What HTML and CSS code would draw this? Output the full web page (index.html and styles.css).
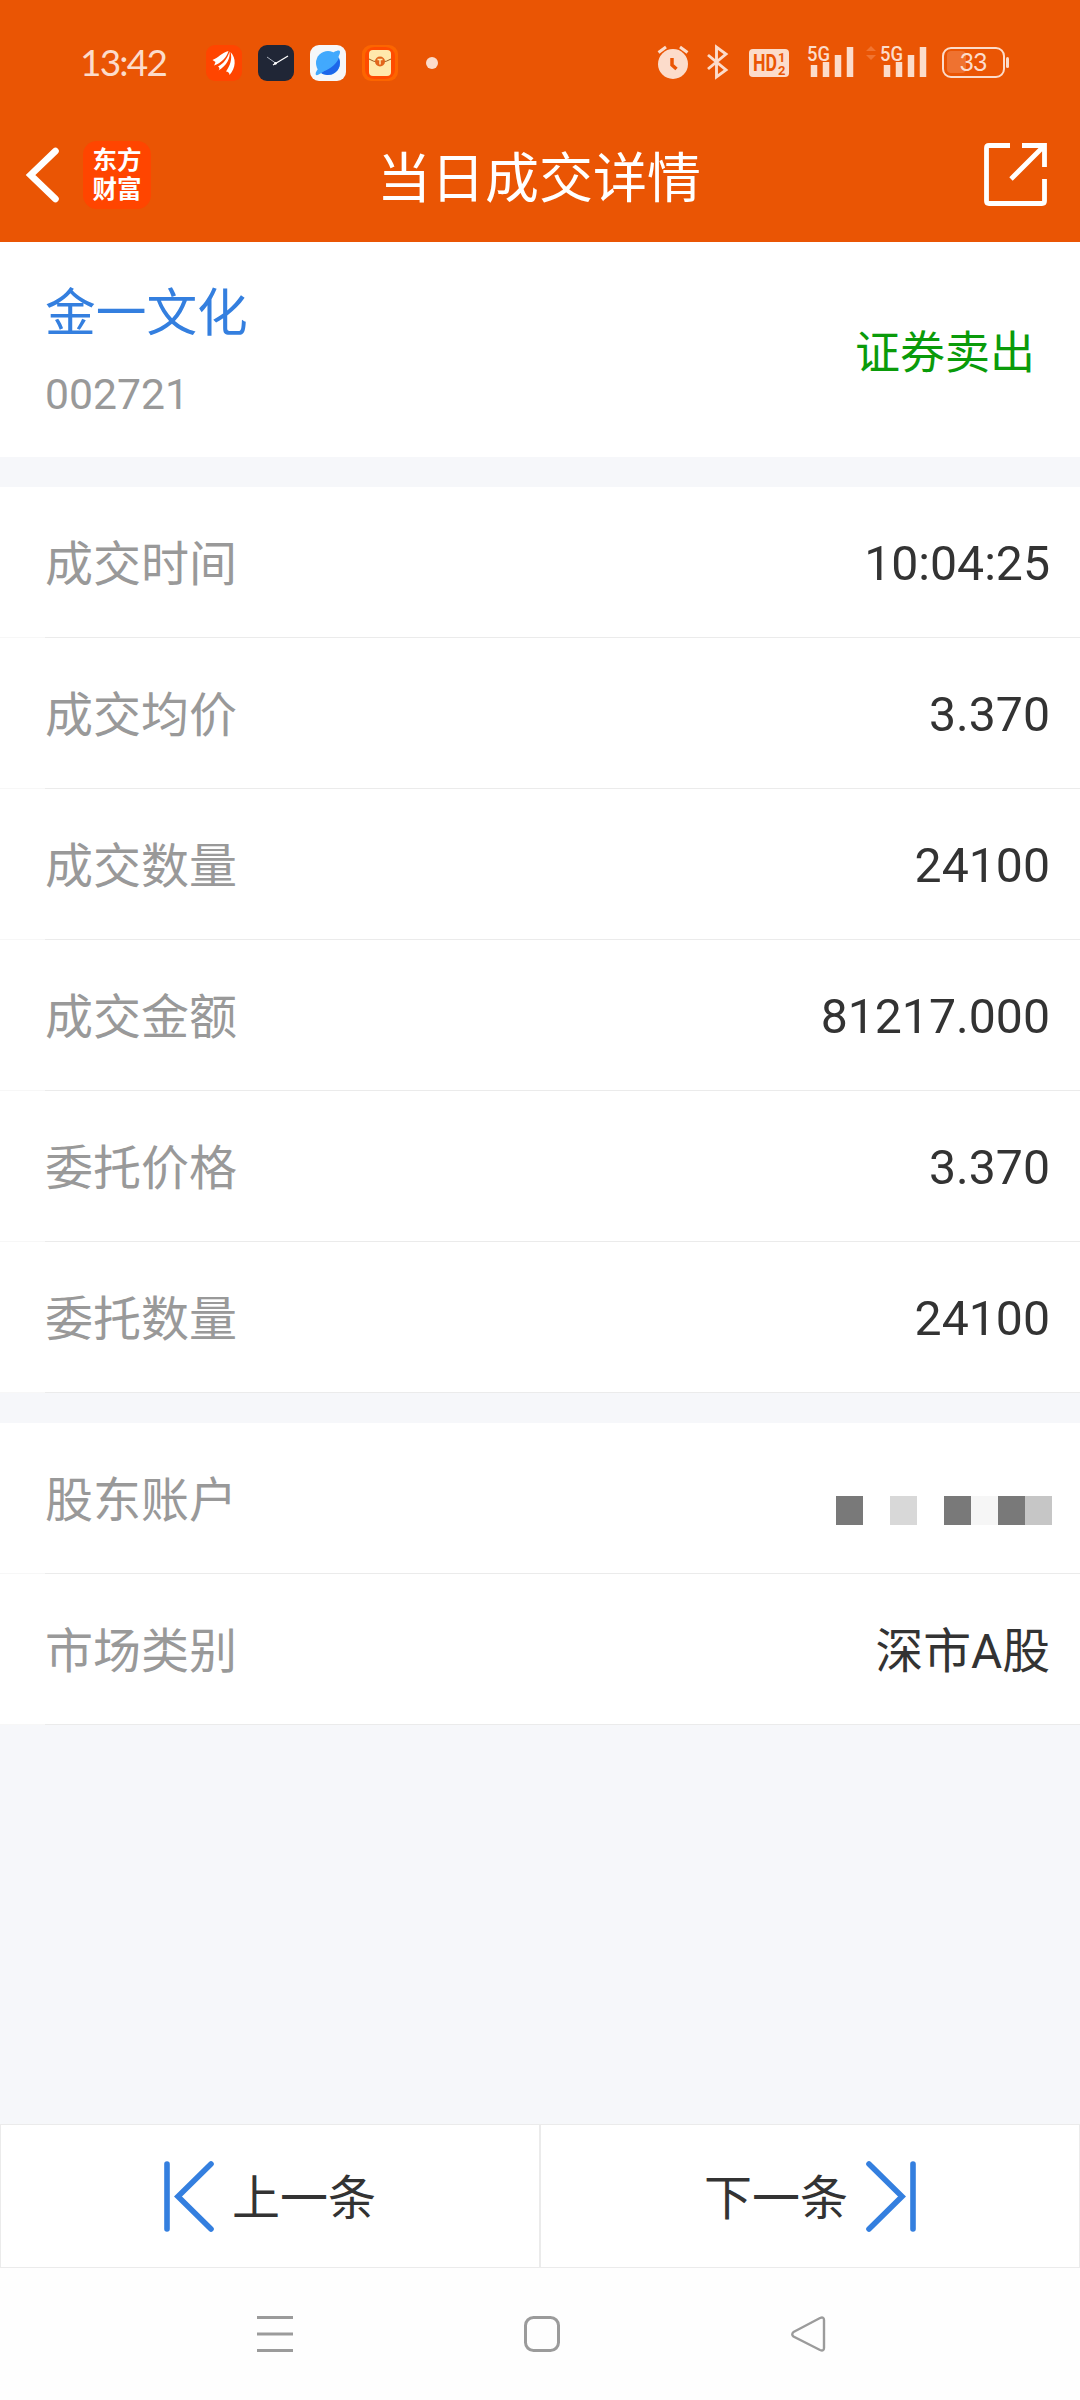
FILE: index.html
```html
<!DOCTYPE html>
<html lang="zh-CN">

<head>
    <meta charset="UTF-8">
    <meta name="viewport" content="width=device-width, initial-scale=1.0">
    <title>当日成交详情</title>
    <link rel="stylesheet" href="styles.css">
</head>

<body>
    <div class="page">
        <div class="top">
            <!-- 状态栏 -->
            <div class="status-bar">
                <span class="clock">13:42</span>
                <div class="app-icons">
                    <svg width="36" height="36" viewBox="0 0 36 36">
                        <rect width="36" height="36" rx="9" fill="#ff4500" />
                        <path d="M6.500 15C12 13 16 7.500 22.500 6C21 12 15 18.500 8 20.500C9 19 9 18 9.500 17Z" fill="#fff" />
                        <path d="M23.500 6.500C24.500 13 21 20.500 12.500 25.500C14 24 13.500 22.500 12 21.500C18 18.500 21.500 13 23.500 6.500Z" fill="#fff" />
                        <path d="M24.500 7C30.500 13 30 23 23.500 30C23.500 28 22 26.500 20 26.500C24 21 26.500 14 24.500 7Z" fill="#fff" />
                    </svg>
                    <svg width="36" height="36" viewBox="0 0 36 36">
                        <rect width="36" height="36" rx="9" fill="#202636" />
                        <path d="M9 12L17.5 18" stroke="#aeb3bd" stroke-width="1" />
                        <path d="M15 20L30 11" stroke="#fff" stroke-width="1.3" />
                        <circle cx="17.5" cy="18.3" r="1.4" fill="#fff" />
                    </svg>
                    <svg width="36" height="36" viewBox="0 0 36 36">
                        <rect width="36" height="36" rx="9" fill="#f6f7f9" />
                        <circle cx="18" cy="18" r="12" fill="#42a9fd" />
                        <path d="M29 13C26 20 18 26 9.500 27A12.300 12.300 0 0 0 29 13Z" fill="#1d66ea" />
                        <path d="M24 7C28 5 30 5 30 7C30 10 27 15 22 20C15 26 8 31 6 30C5 29 6 26 8 24Z" fill="#42a9fd" />
                    </svg>
                    <svg width="36" height="36" viewBox="0 0 36 36">
                        <rect width="36" height="36" rx="9" fill="#fc6500" />
                        <rect x="3" y="2" width="30" height="32" rx="9" fill="#ff4b00" />
                        <rect x="7" y="5" width="22" height="26" rx="4" fill="#ffe9ab" />
                        <path d="M7 14Q11 17 18 17T29 14" fill="none" stroke="#9a5a20" stroke-width="1" />
                        <circle cx="18" cy="16.500" r="5" fill="#e2661b" />
                        <path d="M15.500 14.500H20.500M18 14.500V19.500" stroke="#ffe9ab" stroke-width="1.500" />
                    </svg>
                </div>
                <span class="dot"></span>
                <div class="sys-icons">
                    <svg class="alarm" width="32" height="36" viewBox="0 0 32 36">
                        <circle cx="16" cy="19" r="15" fill="#fcdccb" />
                        <path d="M1.500 7.500L9 2M30.500 7.500L23 2" stroke="#fcdccb" stroke-width="3" />
                        <path d="M15 13V20L19.500 24" fill="none" stroke="#ea5504" stroke-width="3.500" />
                    </svg>
                    <svg class="bluetooth" width="22" height="36" viewBox="0 0 22 36">
                        <path d="M1 10L19 25L9.500 32V2L19 9L1 24" fill="none" stroke="#fcdccb" stroke-width="2.900" />
                    </svg>
                    <svg class="hd" width="40" height="36" viewBox="0 0 40 36">
                        <rect y="4" width="40" height="28" rx="4" fill="#fcdccb" />
                        <text x="4" y="26" class="hd-text" textLength="24" lengthAdjust="spacingAndGlyphs">HD</text>
                        <text x="29" y="17" class="hd-num">1</text>
                        <text x="29" y="29.500" class="hd-num">2</text>
                    </svg>
                    <svg class="signal" width="47" height="36" viewBox="0 0 47 36">
                        <text x="0" y="15.500" class="net" textLength="23" lengthAdjust="spacingAndGlyphs">5G</text>
                        <path d="M7 20V32M19 17V32M31 10V32M43 2V32" stroke="#fcdccb" stroke-width="6.500" />
                    </svg>
                    <svg class="arrows" width="10" height="36" viewBox="0 0 10 36">
                        <path d="M0 6L5 1L10 6ZM0 10L5 15L10 10Z" fill="#f17430" />
                    </svg>
                    <svg class="signal2" width="47" height="36" viewBox="0 0 47 36">
                        <text x="0" y="15.500" class="net" textLength="23" lengthAdjust="spacingAndGlyphs">5G</text>
                        <path d="M7 20V32M19 17V32M31 10V32M43 2V32" stroke="#fcdccb" stroke-width="6.500" />
                    </svg>
                    <svg class="battery" width="67" height="36" viewBox="0 0 67 36">
                        <rect x="5" y="6" width="19" height="22" rx="4" fill="#ef7230" />
                        <rect x="1" y="3" width="61" height="29" rx="8" fill="none" stroke="#fcdccb" stroke-width="2" />
                        <rect x="64" y="12" width="3" height="11" rx="1.500" fill="#fcdccb" />
                        <text x="31" y="26" class="level" text-anchor="middle">33</text>
                    </svg>
                </div>
            </div>

            <!-- 标题栏 -->
            <div class="header">
                <svg class="back" width="34" height="56" viewBox="0 0 34 56">
                    <path d="M29.500 4L4.500 28L29.500 52" fill="none" stroke="#fff" stroke-width="6.600" stroke-linecap="round" />
                </svg>
                <div class="logo">东方<br>财富</div>
                <h1>当日成交详情</h1>
                <svg class="share" width="64" height="64" viewBox="0 0 64 64">
                    <path d="M26 2.500H5Q2.500 2.500 2.500 5V58Q2.500 60.500 5 60.500H58Q60.500 60.500 60.500 58V36M38 2.500H60.500V24M60 3L27 36" fill="none" stroke="#fff" stroke-width="4.800" />
                </svg>
            </div>
        </div>

        <div class="stock">
            <div>
                <div class="stock-name">金一文化</div>
                <div class="stock-code">002721</div>
            </div>
            <div class="direction">证券卖出</div>
        </div>

        <div class="group">
            <div class="row"><span class="label">成交时间</span><span class="value">10:04:25</span></div>
            <div class="row"><span class="label">成交均价</span><span class="value">3.370</span></div>
            <div class="row"><span class="label">成交数量</span><span class="value">24100</span></div>
            <div class="row"><span class="label">成交金额</span><span class="value">81217.000</span></div>
            <div class="row"><span class="label">委托价格</span><span class="value">3.370</span></div>
            <div class="row"><span class="label">委托数量</span><span class="value">24100</span></div>
        </div>

        <div class="group">
            <div class="row">
                <span class="label">股东账户</span>
                <div class="mask">
                    <i class="dark"></i><i></i><i class="light"></i><i></i><i class="dark"></i><i class="pale"></i><i class="dark"></i><i class="mid"></i>
                </div>
            </div>
            <div class="row"><span class="label">市场类别</span><span class="value cjk">深市A股</span></div>
        </div>

        <!-- 上一条 / 下一条 -->
        <div class="pager">
            <div class="pager-btn">
                <svg width="50" height="71" viewBox="0 0 50 71">
                    <path d="M3 3V68M47 3L14 35.500L47 68" fill="none" stroke="#347fdf" stroke-width="5.600" stroke-linecap="round" />
                </svg>
                <span>上一条</span>
            </div>
            <div class="pager-btn">
                <span>下一条</span>
                <svg width="50" height="71" viewBox="0 0 50 71">
                    <path d="M47 3V68M3 3L36 35.500L3 68" fill="none" stroke="#347fdf" stroke-width="5.600" stroke-linecap="round" />
                </svg>
            </div>
        </div>

        <!-- 系统导航 -->
        <div class="nav">
            <svg width="36" height="36" viewBox="0 0 36 36">
                <path d="M0 1.500H36M0 18H36M0 34.500H36" stroke="#9b9b9b" stroke-width="3" />
            </svg>
            <svg width="36" height="36" viewBox="0 0 36 36">
                <rect x="1.500" y="1.500" width="33" height="33" rx="8" fill="none" stroke="#9b9b9b" stroke-width="3" />
            </svg>
            <svg width="35" height="36" viewBox="0 0 35 36">
                <path d="M2.500 16L29 2Q33 0.500 33 4V32Q33 35.500 29 34L2.500 20.500Q0 18.500 2.500 16Z" fill="none" stroke="#9b9b9b" stroke-width="2.400" />
            </svg>
        </div>
    </div>
</body>

</html>
```
FILE: styles.css
```css
body {
    margin: 0;
    background-color: #f6f7fa;
    font-family: Roboto, "Noto Sans CJK SC", sans-serif;
    color: #333;
}

svg {
    display: block;
    flex-shrink: 0;
    overflow: visible;
}

.page {
    display: flex;
    flex-direction: column;
    width: 1080px;
    height: 2400px;
}

.top {
    height: 242px;
    background-color: #ea5504;
}

/* 状态栏 */
.status-bar {
    display: flex;
    align-items: center;
    box-sizing: border-box;
    height: 108px;
    padding: 18px 71px 0 80px;
}

.clock {
    width: 126px;
    padding-bottom: 3px;
    font-family: Lato, sans-serif;
    font-size: 37px;
    letter-spacing: -1.8px;
    color: #fcdccb;
}

.app-icons {
    display: flex;
    gap: 16px;
}

.dot {
    width: 12px;
    height: 12px;
    margin-left: 28px;
    border-radius: 50%;
    background-color: #fcdccb;
}

.sys-icons {
    display: flex;
    margin-left: auto;
}

.bluetooth {
    margin-left: 18px;
}

.hd {
    margin-left: 20px;
}

.signal {
    margin-left: 18px;
}

.arrows {
    margin-left: 12px;
}

.signal2 {
    margin-left: 4px;
}

.battery {
    margin-left: 15px;
}

.hd-text {
    font: bold 23px Roboto, sans-serif;
    fill: #ea5504;
}

.hd-num {
    font: bold 13px Roboto, sans-serif;
    fill: #ea5504;
}

.net {
    font: 500 21px Roboto, sans-serif;
    fill: #fcdccb;
}

.level {
    font: 25px Lato, sans-serif;
    letter-spacing: -1px;
    fill: #fcdccb;
}

/* 标题栏 */
.header {
    display: flex;
    align-items: center;
    height: 134px;
    padding: 0 32px 0 26px;
}

.logo {
    width: 68px;
    height: 65px;
    margin-left: 23px;
    padding-top: 3px;
    border-radius: 14px;
    background-color: #ff4500;
    color: #fff;
    font-family: "Noto Sans CJK SC", sans-serif;
    font-size: 24.5px;
    font-weight: bold;
    line-height: 29px;
    text-align: center;
}

.header h1 {
    flex: 1;
    margin: 0;
    padding-right: 57px;
    padding-bottom: 2px;
    color: #fff;
    font-size: 54px;
    font-weight: normal;
    text-align: center;
}

/* 股票信息 */
.stock {
    display: flex;
    align-items: center;
    justify-content: space-between;
    height: 215px;
    padding: 0 45px;
    background-color: #fff;
}

.stock-name {
    padding-top: 8px;
    font-size: 50.7px;
    line-height: 80px;
    color: #347fdf;
}

.stock-code {
    font-size: 42.7px;
    line-height: 80px;
    color: #999;
}

.direction {
    padding-bottom: 1px;
    font-size: 45px;
    color: #0a9b0a;
}

/* 明细列表 */
.group {
    margin-top: 30px;
    background-color: #fff;
}

.row {
    display: flex;
    align-items: center;
    justify-content: space-between;
    box-sizing: border-box;
    height: 151px;
    padding: 0 30px 0 45px;
    background: linear-gradient(to right, #f7f7f7 45px, #ebebeb 45px) bottom / 100% 1px no-repeat;
}

.label {
    padding-bottom: 5px;
    font-size: 48px;
    color: #999;
}

.value {
    padding-top: 2px;
    font-size: 48.2px;
}

.cjk {
    padding: 0 0 4px;
    font-size: 47.8px;
}

.mask {
    display: grid;
    grid-template-columns: repeat(8, 27px);
    height: 29px;
    margin: 23px -2px 0 0;
}

.mask .dark {
    background-color: #797979;
}

.mask .light {
    background-color: #d8d8d8;
}

.mask .pale {
    background-color: #f6f6f6;
}

.mask .mid {
    background-color: #c6c6c6;
}

/* 翻页按钮 */
.pager {
    display: flex;
    margin-top: auto;
}

.pager-btn {
    display: flex;
    flex: 1;
    align-items: center;
    justify-content: center;
    gap: 18px;
    box-sizing: border-box;
    height: 144px;
    border: 1px solid #ebebeb;
    background-color: #fff;
    font-size: 48px;
}

.pager-btn span {
    padding-bottom: 4px;
}

/* 系统导航 */
.nav {
    display: flex;
    align-items: center;
    justify-content: space-between;
    box-sizing: border-box;
    height: 132px;
    padding: 0 254px 0 257px;
    background-color: #fefefe;
}
```
